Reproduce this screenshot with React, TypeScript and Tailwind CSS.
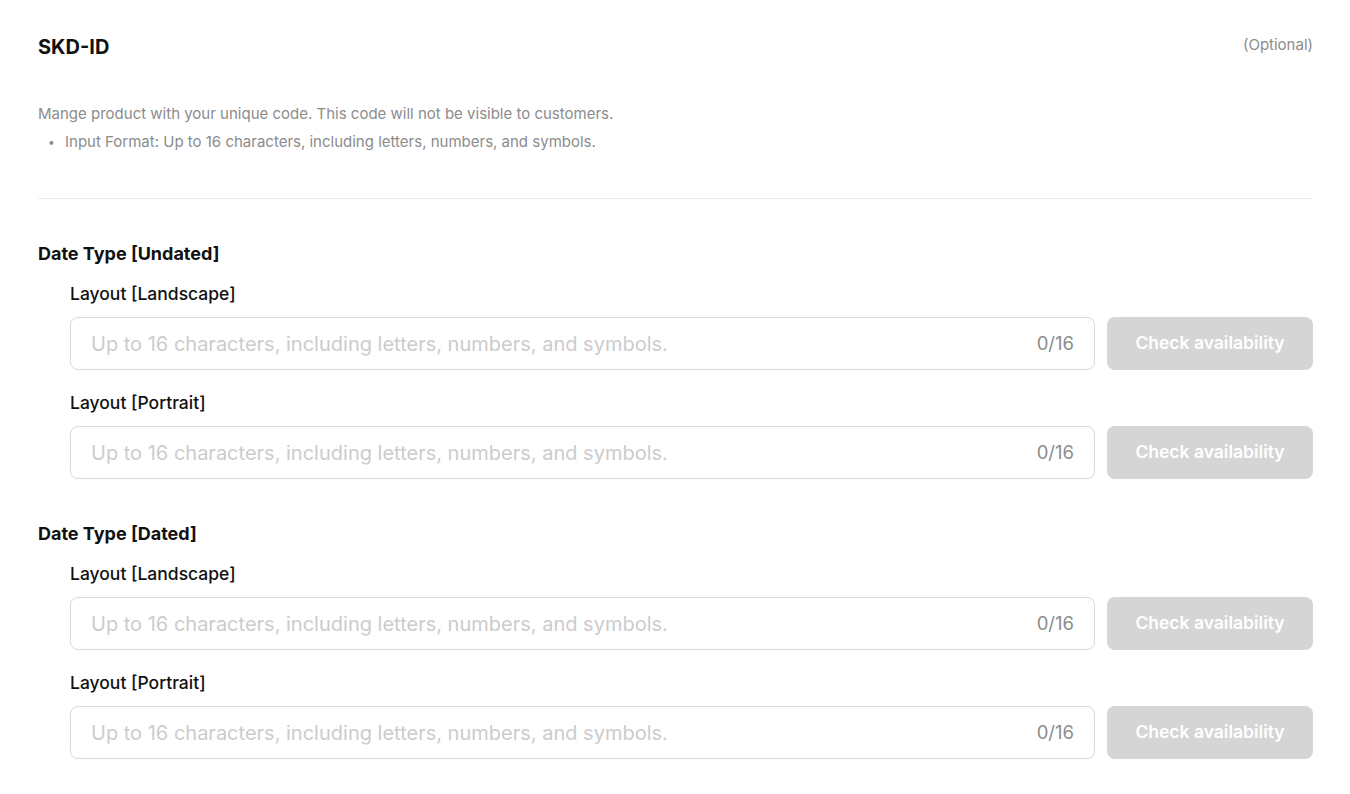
import React from 'react';

const PLACEHOLDER = 'Up to 16 characters, including letters, numbers, and symbols.';

const CodeField: React.FC<{ label: string }> = ({ label }) => (
  <div>
    <p className="text-[17.5px] leading-6 font-medium text-[#111111]">{label}</p>
    <div className="mt-[11px] flex gap-3">
      <div className="flex-1 h-[53px] rounded-lg border border-[#d9d9d9] flex items-center pl-5 pr-5">
        <input
          className="flex-1 bg-transparent outline-none text-[20px] text-[#222] placeholder:text-[#cccccc]"
          placeholder={PLACEHOLDER}
        />
        <span className="text-[18.5px] text-[#8c8c8c]">0/16</span>
      </div>
      <button
        disabled
        className="w-[206px] h-[53px] rounded-lg bg-[#d5d5d5] text-white text-[17.5px] font-semibold"
      >
        Check availability
      </button>
    </div>
  </div>
);

const DateSection: React.FC<{ title: string }> = ({ title }) => (
  <div>
    <h3 className="text-[18px] leading-6 font-bold text-[#111111]">{title}</h3>
    <div className="pl-8 mt-4 space-y-[21px]">
      <CodeField label="Layout [Landscape]" />
      <CodeField label="Layout [Portrait]" />
    </div>
  </div>
);

const App: React.FC = () => {
  return (
    <div className="min-h-screen bg-white pl-[38px] pr-[37px] pt-[33px] pb-8" style={{ fontFamily: 'Inter, "Noto Sans", sans-serif' }}>
      <div className="flex items-start justify-between">
        <h1 className="text-[20px] leading-7 font-bold text-[#111111]">SKD-ID</h1>
        <span className="text-[15px] leading-6 text-[#8c8c8c]">(Optional)</span>
      </div>

      <div className="mt-[43px] text-[15px] leading-5 text-[#8c8c8c]">
        <p>Mange product with your unique code. This code will not be visible to customers.</p>
        <div className="mt-2 flex items-center">
          <span className="w-[27px] pl-[10px] text-[12px]">•</span>
          <span>Input Format: Up to 16 characters, including letters, numbers, and symbols.</span>
        </div>
      </div>

      <div className="mt-[46px] border-t border-[#ececec]" />

      <div className="mt-[43px] space-y-[43px]">
        <DateSection title="Date Type [Undated]" />
        <DateSection title="Date Type [Dated]" />
      </div>
    </div>
  );
};

export default App;
